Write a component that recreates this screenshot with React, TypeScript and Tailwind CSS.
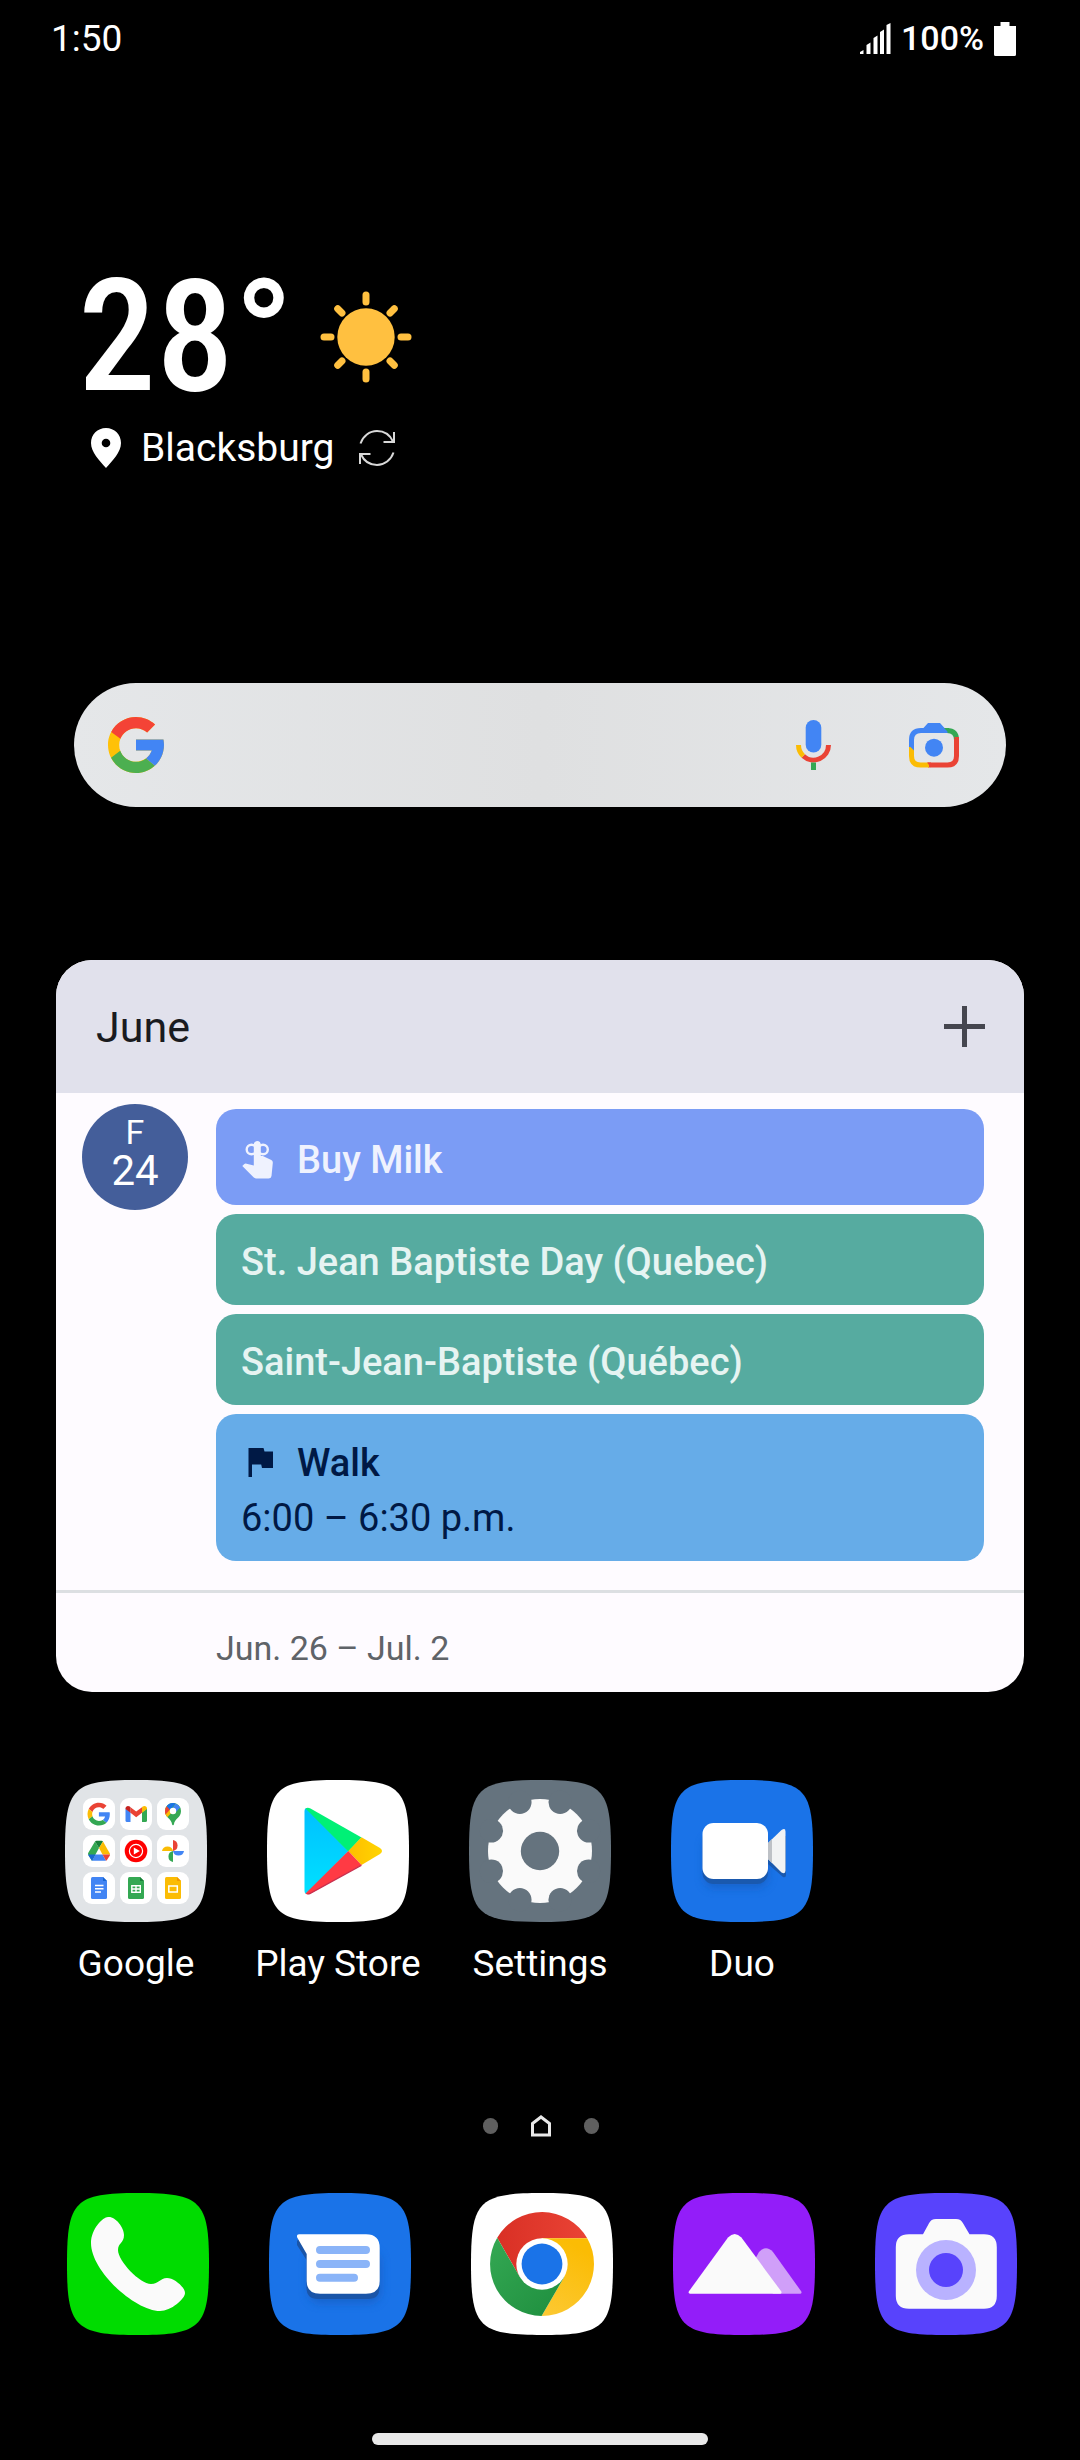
import React, { useState } from "react";

interface CalendarEvent {
  title: string;
  time?: string;
  icon?: React.ReactNode;
  className: string;
}

interface AppShortcut {
  name: string;
  icon: React.ReactNode;
}

/* ---------- Status bar ---------- */

const SignalIcon = () => (
  <svg viewBox="0 0 31 31" className="h-[31px] w-[31px]" fill="#fff" aria-hidden="true">
    <path d="M0 31v-2l3.500-2v4zM6.500 31v-9l4-2.500V31zM13.500 31V15l4-2.500V31zM20 31V9l4-2.500V31zM26.500 31V2l4-2v31z" />
  </svg>
);

const BatteryIcon = () => (
  <svg viewBox="0 0 22 34" className="h-[34px] w-[22px]" fill="#fff" aria-hidden="true">
    <path d="M6.500 0h9v4H22v28.500q0 1.500-1.500 1.500h-19Q0 34 0 32.500V4h6.500z" />
  </svg>
);

/* ---------- Weather ---------- */

const rays = [0, 45, 90, 135, 180, 225, 270, 315];

const SunIcon = () => (
  <svg viewBox="0 0 92 92" className="h-[92px] w-[92px]" aria-hidden="true">
    <circle cx="46" cy="46" r="28.700" fill="#ffc040" />
    {rays.map((angle) => (
      <path
        key={angle}
        d={angle % 90 === 0 ? "M46 4v7" : "M46 6v6"}
        stroke="#ffc040"
        strokeWidth="7"
        strokeLinecap="round"
        transform={`rotate(${angle} 46 46)`}
      />
    ))}
  </svg>
);

const PinIcon = () => (
  <svg viewBox="0 0 30 40" className="h-10 w-[30px]" aria-hidden="true">
    <path d="M15 0C6.500 0 0 6.600 0 15c0 9.500 8.500 17.500 15 25 6.500-7.500 15-15.500 15-25C30 6.600 23.500 0 15 0z" fill="#fff" />
    <circle cx="15" cy="15" r="4.300" fill="#000" />
  </svg>
);

const RefreshIcon = () => (
  <svg viewBox="0 0 38 38" className="h-[38px] w-[38px]" fill="none" stroke="#d8d8d8" strokeWidth="2" aria-hidden="true">
    <path d="M2.500 14.500C5 7 11.500 2 19 2c7 0 13 4 16 10.500M36 3v10H25.500" />
    <path d="M35.500 23.500C33 31 26.500 36 19 36c-7 0-13-4-16-10.500M2 35V25h10.500" />
  </svg>
);

/* ---------- Search bar ---------- */

const GoogleLogo = () => (
  <svg viewBox="4 4 40 40" className="h-14 w-14" aria-hidden="true">
    <path fill="#ffc107" d="M43.611 20.083H42V20H24v8h11.303c-1.649 4.657-6.080 8-11.303 8-6.627 0-12-5.373-12-12s5.373-12 12-12c3.059 0 5.842 1.154 7.961 3.039l5.657-5.657C34.046 6.053 29.268 4 24 4 12.955 4 4 12.955 4 24s8.955 20 20 20 20-8.955 20-20c0-1.341-.138-2.650-.389-3.917z" />
    <path fill="#f44336" d="M6.306 14.691l6.571 4.819C14.655 15.108 18.961 12 24 12c3.059 0 5.842 1.154 7.961 3.039l5.657-5.657C34.046 6.053 29.268 4 24 4 16.318 4 9.656 8.337 6.306 14.691z" />
    <path fill="#4caf50" d="M24 44c5.166 0 9.860-1.977 13.409-5.192l-6.190-5.238A11.910 11.910 0 0 1 24 36c-5.202 0-9.619-3.317-11.283-7.946l-6.522 5.025C9.505 39.556 16.227 44 24 44z" />
    <path fill="#4285f4" d="M43.611 20.083H42V20H24v8h11.303a12.040 12.040 0 0 1-4.087 5.571l6.190 5.238C36.971 39.205 44 34 44 24c0-1.341-.138-2.650-.389-3.917z" />
  </svg>
);

const MicIcon = () => (
  <svg viewBox="0 0 35 50" className="h-[50px] w-[35px]" fill="none" strokeWidth="5" aria-hidden="true">
    <rect x="9.700" y="0" width="15.600" height="32.500" rx="7.800" fill="#4285f4" />
    <path d="M7.300 36A15 15 0 0 0 32.500 25" stroke="#ea4335" />
    <path d="M2.500 25a15 15 0 0 0 4.800 11" stroke="#fbbc04" />
    <path d="M17.500 42.500V50" stroke="#34a853" />
  </svg>
);

const LensIcon = () => (
  <svg viewBox="0 0 50 45" className="h-[45px] w-[50px]" fill="none" strokeWidth="5" aria-hidden="true">
    <path d="M2.500 25V17q0-9.500 9.500-9.500h28" stroke="#4285f4" />
    <path d="M38 7.500q9.500 0 9.500 9.500" stroke="#34a853" />
    <path d="M47.500 15.500V33q0 9-9 9H19" stroke="#ea4335" />
    <path d="M2.500 24v9q0 9 9 9H20" stroke="#fbbc04" />
    <path d="M0 22.500l5 5V22H0zM14 5.500L19 0h12l8.500 9.500H14z" fill="#4285f4" />
    <path d="M35 5h5v5z" fill="#34a853" />
    <path d="M45 14l5 5v-5zM18 39.500l4 5v-5z" fill="#ea4335" />
    <circle cx="25" cy="24.700" r="9" fill="#4285f4" />
  </svg>
);

/* ---------- Calendar ---------- */

const ReminderIcon = () => (
  <svg viewBox="0 0 32 38" className="h-[38px] w-8" aria-hidden="true">
    <g fill="none" stroke="currentColor" strokeWidth="2.400">
      <circle cx="10.500" cy="8.500" r="4.800" />
      <circle cx="22" cy="8.500" r="4.800" />
    </g>
    <path
      d="M16.300 0c2 0 3.500 1.600 3.500 3.500V15h2l8.500 4q1.700 1 1.500 3l-1.300 13q-.4 2.500-3 2.500H15.300q-1.700 0-2.800-1.200L1.300 25l1.800-1.800q1-.9 2.500-.5l7.200 1.800v-21C12.800 1.600 14.300 0 16.300 0z"
      fill="currentColor"
    />
  </svg>
);

const FlagIcon = () => (
  <svg viewBox="0 0 32 38" className="h-[38px] w-8" fill="currentColor" aria-hidden="true">
    <path d="M7.500 4H22.500l1 3.500h9V24H21l-.8-3.500H11V33H7.500z" />
  </svg>
);

const events: CalendarEvent[] = [
  { title: "Buy Milk", icon: <ReminderIcon />, className: "h-[96px] bg-[#7b9cf5] text-[#eff2fe]" },
  { title: "St. Jean Baptiste Day (Quebec)", className: "h-[91px] bg-[#56aba0] text-[#e6f4f2]" },
  { title: "Saint-Jean-Baptiste (Québec)", className: "h-[91px] bg-[#56aba0] text-[#e6f4f2]" },
  {
    title: "Walk",
    time: "6:00 – 6:30 p.m.",
    icon: <FlagIcon />,
    className: "h-[147px] bg-[#66ace8] text-[#001945]",
  },
];

const EventCard: React.FC<{ event: CalendarEvent }> = ({ event }) => (
  <button
    type="button"
    className={`flex w-full flex-col justify-center rounded-[20px] px-[25px] pt-1.5 text-left text-[38px] leading-[55px] ${event.className}`}
  >
    <span className="flex items-center gap-6 font-medium">
      {event.icon}
      {event.title}
    </span>
    {event.time && <span>{event.time}</span>}
  </button>
);

const CalendarWidget = () => (
  <section className="mx-14 overflow-hidden rounded-[36px] bg-[#fefbff]">
    <header className="flex h-[133px] items-center justify-between bg-[#e1e1ec] pr-[39px] pl-10">
      <h2 className="pt-0.5 text-[43px] text-[#1a1b1f]">June</h2>
      <button type="button" aria-label="Add event">
        <svg viewBox="0 0 41 41" className="h-[41px] w-[41px]" stroke="#45464f" strokeWidth="5" aria-hidden="true">
          <path d="M20.500 0v41M0 20.500h41" />
        </svg>
      </button>
    </header>
    <div className="flex gap-7 pt-4 pr-10 pb-[29px] pl-[26px]">
      <div className="-mt-[5px] flex h-[106px] w-[106px] shrink-0 flex-col items-center rounded-full bg-[#445e9a] pt-2 text-white">
        <span className="text-[34px] leading-[40px]">F</span>
        <span className="text-[42px] leading-[38px]">24</span>
      </div>
      <div className="flex flex-1 flex-col gap-[9px]">
        {events.map((event) => (
          <EventCard key={event.title} event={event} />
        ))}
      </div>
    </div>
    <footer className="flex h-[102px] items-center border-t-[3px] border-[#dcdfe2] pt-3 pl-40 text-[34px] text-[#5f6368]">
      Jun. 26 – Jul. 2
    </footer>
  </section>
);

/* ---------- App icons ---------- */

interface SquircleProps {
  fill: string;
  children: React.ReactNode;
}

const Squircle: React.FC<SquircleProps> = ({ fill, children }) => (
  <svg viewBox="0 0 142 142" className="h-[142px] w-[142px]" aria-hidden="true">
    <path d="M0 71C0 8 8 0 71 0s71 8 71 71-8 71-71 71S0 134 0 71z" fill={fill} />
    {children}
  </svg>
);

const folderTiles: React.ReactNode[] = [
  // Google
  <g transform="translate(4.500 4.700) scale(.475)">
    <path fill="#ea4335" d="M24 9.500c3.540 0 6.710 1.220 9.210 3.600l6.850-6.850C35.900 2.380 30.470 0 24 0 14.620 0 6.510 5.380 2.560 13.220l7.980 6.190C12.430 13.720 17.740 9.500 24 9.500z" />
    <path fill="#4285f4" d="M46.980 24.550c0-1.570-.15-3.090-.38-4.550H24v9.020h12.940c-.58 2.960-2.260 5.480-4.780 7.180l7.730 6c4.510-4.180 7.090-10.360 7.090-17.650z" />
    <path fill="#fbbc05" d="M10.530 28.590c-.48-1.450-.76-2.990-.76-4.590s.27-3.140.76-4.590l-7.980-6.190C.92 16.460 0 20.120 0 24s.92 7.540 2.560 10.780l7.970-6.190z" />
    <path fill="#34a853" d="M24 48c6.480 0 11.930-2.130 15.890-5.810l-7.730-6c-2.150 1.450-4.920 2.300-8.160 2.300-6.260 0-11.570-4.220-13.470-9.910l-7.980 6.190C6.510 42.620 14.620 48 24 48z" />
  </g>,
  // Gmail
  <g>
    <path d="M5.500 10.500l5 3.800V24H7q-1.500 0-1.500-1.500z" fill="#4285f4" />
    <path d="M27 10.500l-5 3.800V24h3.500q1.500 0 1.500-1.500z" fill="#34a853" />
    <path d="M10.500 9.200l5.700 4.300L22 9.200v5.600l-5.800 4.400-5.700-4.400z" fill="#ea4335" />
    <path d="M5.500 10.500c0-2.500 2.600-3.300 4.300-2l.7.700v5.600l-5-3.800z" fill="#c5221f" />
    <path d="M27 10.500c0-2.500-2.600-3.300-4.300-2l-.7.700v5.600l5-3.800z" fill="#fbbc04" />
  </g>,
  // Maps
  <g>
    <path d="M16 5a8 8 0 0 0-8 8c0 7 6.500 7.500 7 13q.2 1.300 1 1.300t1-1.300c.5-5.500 7-6 7-13a8 8 0 0 0-8-8z" fill="#34a853" />
    <path d="M9.700 8.200L16 13l-5.700 6.200C8.800 17.500 8 15.500 8 13q0-3 1.700-4.800z" fill="#fbbc04" />
    <path d="M9.700 8.200L13.500 11l-4.900 5.400Q8 15 8 13q0-3 1.700-4.800z" fill="#ea4335" />
    <path d="M9.700 8.200C12 5 15 4.500 18.400 5.400L13 12z" fill="#1a73e8" />
    <path d="M18.400 5.400q3.200 1 4.800 4.200L17 16l-2-5z" fill="#4285f4" />
    <circle cx="16" cy="13" r="3.200" fill="#fff" />
  </g>,
  // Drive
  <g>
    <path d="M12 6.500L16 13 9 26 5.300 19.700q-.6-1 0-2z" fill="#34a853" />
    <path d="M12 6.500q.5-.8 1.500-.8h5q1 0 1.500.8L16 13z" fill="#188038" />
    <path d="M20 6.500l6.700 11.700q.3.600.3 1.300h-7.500L16 13z" fill="#fbbc04" />
    <path d="M12.500 19.500h7l3.500 6.300H9z" fill="#4285f4" />
    <path d="M5 19.500h7.500L9 25.800l-3.400-5z" fill="#1967d2" />
    <path d="M19.500 19.500H27q0 .6-.3 1.200l-2.900 4.600-.8.500z" fill="#ea4335" />
  </g>,
  // YouTube Music
  <g>
    <circle cx="16" cy="16" r="11.300" fill="#f00" />
    <circle cx="16" cy="16" r="6.600" fill="none" stroke="#fff" strokeWidth="1.200" />
    <path d="M13.800 12.500l6 3.500-6 3.500z" fill="#fff" />
  </g>,
  // Photos
  <g>
    <path d="M16 5a5.600 5.600 0 0 1 0 11z" fill="#ea4335" />
    <path d="M27 16a5.600 5.600 0 0 1-11 0z" fill="#4285f4" />
    <path d="M16 27a5.600 5.600 0 0 1 0-11z" fill="#34a853" />
    <path d="M5 16a5.600 5.600 0 0 1 11 0z" fill="#fbbc04" />
  </g>,
  // Docs
  <g>
    <path d="M9.500 5H20l4 4v16.500q0 1.500-1.500 1.500h-13Q8 27 8 25.500v-19Q8 5 9.500 5z" fill="#4285f4" />
    <path d="M20 5l4 4h-4z" fill="#1967d2" />
    <path d="M12 13.500h8.500M12 16.800h8.500M12 20h6" stroke="#fff" strokeWidth="1.500" />
  </g>,
  // Sheets
  <g>
    <path d="M9.500 5H20l4 4v16.500q0 1.500-1.500 1.500h-13Q8 27 8 25.500v-19Q8 5 9.500 5z" fill="#34a853" />
    <path d="M20 5l4 4h-4z" fill="#188038" />
    <path d="M11.800 13.800h8.500v6.500h-8.500zM11.800 17h8.500M16 13.800v6.500" stroke="#fff" strokeWidth="1.400" fill="none" />
  </g>,
  // Slides
  <g>
    <path d="M9.500 5H20l4 4v16.500q0 1.500-1.500 1.500h-13Q8 27 8 25.500v-19Q8 5 9.500 5z" fill="#fbbc04" />
    <path d="M20 5l4 4h-4z" fill="#f29900" />
    <path d="M11.800 14h8.500v6h-8.500z" stroke="#fff" strokeWidth="1.500" fill="none" />
  </g>,
];

const FolderIcon = () => (
  <Squircle fill="#e1e4e7">
    {folderTiles.map((tile, i) => (
      <g key={i} transform={`translate(${18 + (i % 3) * 37} ${18 + Math.floor(i / 3) * 37})`}>
        <rect width="32" height="32" rx="9" fill="#fff" />
        {tile}
      </g>
    ))}
  </Squircle>
);

const PlayStoreIcon = () => (
  <Squircle fill="#fff">
    <defs>
      <linearGradient id="playBlue" x1="0" y1="0" x2="0" y2="1">
        <stop offset="0" stopColor="#00c0ff" />
        <stop offset="1" stopColor="#00e1ff" />
      </linearGradient>
      <linearGradient id="playYellow" x1="0" y1="0" x2="1" y2="0">
        <stop offset="0" stopColor="#ffbd00" />
        <stop offset="1" stopColor="#ffd500" />
      </linearGradient>
    </defs>
    <path d="M37.500 31q0-2 1.500-3l42.500 43L39 114q-1.500-1-1.500-3z" fill="url(#playBlue)" />
    <path d="M38.500 28.500q2-1.500 5 0l51 29-13.200 14z" fill="#00f076" />
    <path d="M94.500 57.300L113 68q4 3 0 6L94.500 85 81.300 71z" fill="url(#playYellow)" />
    <path d="M81.300 71l13.200 14-51 28.500q-3 1.500-5 0z" fill="#ff3a44" />
    <path d="M94.500 84.500v1.500l-51 28q-3 1.300-5-.5 2 .5 5-1z" fill="#c9304f" />
  </Squircle>
);

const SettingsIcon = () => (
  <Squircle fill="#65737e">
    <circle cx="71" cy="71" r="52" fill="#fafafa" />
    {rays.map((angle) => (
      <circle key={angle} cx="71" cy="18.300" r="11.700" fill="#65737e" transform={`rotate(${angle + 22.5} 71 71)`} />
    ))}
    <circle cx="71" cy="71" r="19.200" fill="#65737e" />
  </Squircle>
);

const DuoIcon = () => (
  <Squircle fill="#1a73e8">
    <defs>
      <filter id="duoShadow" x="-30%" y="-30%" width="160%" height="180%">
        <feGaussianBlur stdDeviation="5" />
      </filter>
    </defs>
    <rect x="33" y="56" width="64" height="52" rx="10" fill="#1558b8" opacity=".6" filter="url(#duoShadow)" />
    <rect x="31.500" y="48" width="65.500" height="56" rx="11" fill="#1a59ae" />
    <path d="M97 70l15-14h3v39q0 3-3 2L97 84z" fill="#1a59ae" />
    <path d="M96 64l14.500-14q4-2.500 4 1.500v39q0 4-4 2L96 78z" fill="#f1f3f4" />
    <path d="M96 64l5-5v24l-5-5z" fill="#bdc1c6" />
    <rect x="31.500" y="43" width="65.500" height="56" rx="11" fill="#fff" />
  </Squircle>
);

const PhoneIcon = () => (
  <Squircle fill="#00dc00">
    <path
      d="M41 24C48 23 57 34 57 42c0 8-6 8-6 15 0 11 22 34 33 34 8 0 9-6 16-6s18 9 18 15-14 18-25 18C68 118 24 78 24 50 24 36 36 24 41 24z"
      fill="#fafafa"
    />
  </Squircle>
);

const MessagesIcon = () => (
  <Squircle fill="#1a73e8">
    <defs>
      <filter id="msgShadow" x="-30%" y="-30%" width="160%" height="180%">
        <feGaussianBlur stdDeviation="5" />
      </filter>
    </defs>
    <rect x="39" y="58" width="73" height="52" rx="12" fill="#1558b8" opacity=".6" filter="url(#msgShadow)" />
    <path d="M28 48l2-2h69q11.500 0 11.500 11.500v37q0 11.500-11.500 11.500H49q-11.500 0-11.500-11.500V67L28 52z" fill="#1a55a8" />
    <path d="M30 41.300h67q13.700 0 13.700 13.700v33q0 12.700-13.700 12.700H51q-13.300 0-13.300-12.700V61l-9.500-16.500q-1-3.200 1.800-3.200z" fill="#fff" />
    <path d="M51 57h46M51 71h46M51 84.800h34" stroke="#8ab4f8" strokeWidth="8" strokeLinecap="round" />
  </Squircle>
);

const ChromeIcon = () => (
  <Squircle fill="#fff">
    <defs>
      <linearGradient id="chromeRed" x1="0" y1="0" x2="1" y2="0">
        <stop offset="0" stopColor="#d93025" />
        <stop offset="1" stopColor="#ea4335" />
      </linearGradient>
      <linearGradient id="chromeYellow" x1="0" y1="1" x2=".4" y2="0">
        <stop offset="0" stopColor="#fcc934" />
        <stop offset="1" stopColor="#fbbc04" />
      </linearGradient>
      <linearGradient id="chromeGreen" x1="1" y1="1" x2="0" y2="0">
        <stop offset="0" stopColor="#1e8e3e" />
        <stop offset="1" stopColor="#34a853" />
      </linearGradient>
    </defs>
    <path d="M26.200 44.700A52 52 0 0 1 116.200 45.300H71L48.700 83.850z" fill="url(#chromeRed)" />
    <path d="M116.200 45.300A52 52 0 0 1 70.600 123l22.700-39.150L71 45.300z" fill="url(#chromeYellow)" />
    <path d="M70.600 123A52 52 0 0 1 26.200 44.700l22.500 39.150h44.600z" fill="url(#chromeGreen)" />
    <circle cx="71" cy="71" r="25.700" fill="#fff" />
    <circle cx="71" cy="71" r="20.400" fill="#1a73e8" />
  </Squircle>
);

const GalleryIcon = () => (
  <Squircle fill="#931df9">
    <path d="M80 70l6-11q7-7.500 14 0l28.300 39.500q.7 2.200-1.300 2.200H100z" fill="#d09ff9" />
    <path d="M15.800 98.500L55 44.500q6.700-7 13.400 0l39.900 54q.7 2.200-1.300 2.200H17q-2 0-1.200-2.200z" fill="#fafafa" />
  </Squircle>
);

const CameraIcon = () => (
  <Squircle fill="#5843fc">
    <path
      d="M34 41.300h14l6-11q2-4.300 7-4.300h20q5 0 7 4.300l6.500 11H109q12.800 0 12.800 13v48.500q0 13-12.800 13H34q-13.200 0-13.200-13V54.300q0-13 13.200-13z"
      fill="#fafafa"
    />
    <circle cx="71" cy="77" r="30" fill="#b9b2ff" />
    <circle cx="71" cy="77" r="17" fill="#5843fc" />
  </Squircle>
);

const apps: AppShortcut[] = [
  { name: "Google", icon: <FolderIcon /> },
  { name: "Play Store", icon: <PlayStoreIcon /> },
  { name: "Settings", icon: <SettingsIcon /> },
  { name: "Duo", icon: <DuoIcon /> },
];

const dock: AppShortcut[] = [
  { name: "Phone", icon: <PhoneIcon /> },
  { name: "Messages", icon: <MessagesIcon /> },
  { name: "Chrome", icon: <ChromeIcon /> },
  { name: "Gallery", icon: <GalleryIcon /> },
  { name: "Camera", icon: <CameraIcon /> },
];

export default function App() {
  const [query, setQuery] = useState("");

  return (
    <main className="flex min-h-screen flex-col bg-black font-['Roboto',sans-serif] text-white">
      {/* Status bar */}
      <header className="flex h-[77px] items-center justify-between pr-16 pl-[51px]">
        <time className="text-[37px]">1:50</time>
        <div className="flex items-center gap-2.5">
          <SignalIcon />
          <span className="text-[34px] font-medium">100%</span>
          <BatteryIcon />
        </div>
      </header>

      {/* Weather */}
      <section className="mt-[190px] pl-[78px]">
        <div className="flex h-[140px] items-center gap-[26px]">
          <span className="font-['Roboto_Condensed','Roboto',sans-serif] text-[156px] leading-[140px] font-medium">28°</span>
          <SunIcon />
        </div>
        <div className="mt-[17px] flex h-12 items-center pl-[13px]">
          <PinIcon />
          <span className="ml-5 text-[39px]">Blacksburg</span>
          <button type="button" aria-label="Refresh weather" className="ml-6">
            <RefreshIcon />
          </button>
        </div>
      </section>

      {/* Search */}
      <form
        role="search"
        className="mx-[74px] mt-[211px] flex h-[124px] items-center rounded-full bg-linear-to-r from-[#e5e7e9] via-[#dfe0e1] to-[#e5e7e9] pr-[47px] pl-[34px]"
        onSubmit={(e) => e.preventDefault()}
      >
        <GoogleLogo />
        <input
          type="search"
          aria-label="Search"
          value={query}
          onChange={(e) => setQuery(e.target.value)}
          className="mx-6 h-full min-w-0 flex-1 bg-transparent text-[38px] text-[#1a1b1f] outline-none"
        />
        <button type="button" aria-label="Voice search">
          <MicIcon />
        </button>
        <button type="button" aria-label="Google Lens" className="ml-[78px]">
          <LensIcon />
        </button>
      </form>

      <div className="mt-[153px]">
        <CalendarWidget />
      </div>

      {/* App shortcuts */}
      <div className="mt-[88px] grid grid-cols-5 px-[35px]">
        {apps.map((app) => (
          <button key={app.name} type="button" className="flex flex-col items-center">
            {app.icon}
            <span className="mt-[18px] text-[37px] leading-[48px] whitespace-nowrap">{app.name}</span>
          </button>
        ))}
      </div>

      {/* Page indicator */}
      <div className="mt-[126px] flex h-6 items-center justify-center gap-8 pl-0.5">
        <span className="h-4 w-[15px] rounded-full bg-[#5f5f5f]" />
        <svg viewBox="0 0 22 22" className="h-[22px] w-[22px]" fill="none" stroke="#e8e8e8" strokeWidth="3" aria-hidden="true">
          <path d="M2.500 8.500L11 2l8.500 6.500V20h-17z" />
        </svg>
        <span className="h-4 w-[15px] rounded-full bg-[#5f5f5f]" />
      </div>

      {/* Dock */}
      <nav className="mt-[55px] grid grid-cols-5 pr-[33px] pl-[37px]">
        {dock.map((app) => (
          <button key={app.name} type="button" aria-label={app.name} className="flex justify-center">
            {app.icon}
          </button>
        ))}
      </nav>

      {/* Gesture bar */}
      <div className="mt-[98px] mb-3.5 h-3 w-[336px] self-center rounded-full bg-[#e9e9e9]" />
    </main>
  );
}
